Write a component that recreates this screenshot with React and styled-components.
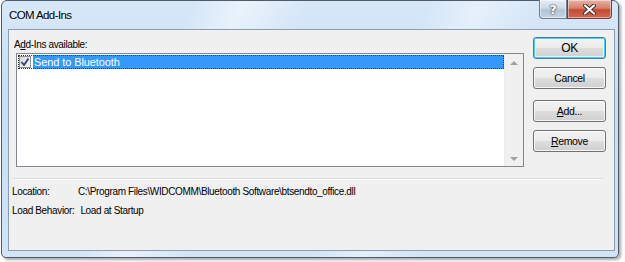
import React from "react";
import styled, { createGlobalStyle } from "styled-components";

const Global = createGlobalStyle`
  html, body { margin: 0; padding: 0; background: #ffffff; }
  body { font-family: "Liberation Sans", Arial, sans-serif; }
`;

const Page = styled.div`
  width: 625px;
  height: 262px;
  padding: 0 0 0 1px;
  box-sizing: border-box;
`;

const Window = styled.div`
  position: relative;
  width: 618px;
  height: 258px;
  box-sizing: border-box;
  border: 1px solid #4d5b6b;
  border-radius: 6px 6px 5px 5px;
  background:
    linear-gradient(115deg, rgba(255,255,255,0) 0%, rgba(255,255,255,0) 26%, rgba(255,255,255,0.5) 33%, rgba(255,255,255,0) 42%, rgba(255,255,255,0) 58%, rgba(255,255,255,0.4) 65%, rgba(255,255,255,0) 74%),
    linear-gradient(180deg, #d6e7f8 0%, #c9def3 40%, #d2e4f6 100%);
  box-shadow: 2px 2px 3px rgba(0,0,0,0.35);
  display: flex;
  flex-direction: column;
  padding: 0 3px 6px 6px;
`;

const TitleBar = styled.div`
  height: 28px;
  display: flex;
  align-items: center;
`;

const Title = styled.div`
  font-family: "Liberation Sans", Arial, sans-serif;
  font-size: 11.5px;
  letter-spacing: -0.6px;
  color: #000;
  padding-left: 1px;
  text-shadow: 0 0 6px rgba(255,255,255,0.9);
`;

const Captions = styled.div`
  position: absolute;
  top: -1px;
  right: 6px;
  display: flex;
`;

const CapButton = styled.div`
  width: ${p => p.$w}px;
  height: 19px;
  box-sizing: border-box;
  border: 1px solid ${p => (p.$close ? "#7a3b32" : "#6f7f90")};
  border-top: none;
  border-radius: ${p => (p.$close ? "0 0 4px 0" : "0 0 0 4px")};
  background: ${p =>
    p.$close
      ? "linear-gradient(180deg, #e9b2a6 0%, #d7806e 45%, #c54a32 55%, #cf6a4f 100%)"
      : "linear-gradient(180deg, #e6eef7 0%, #cdd9e6 45%, #b3c3d6 55%, #c6d4e3 100%)"};
  box-shadow: inset 0 0 0 1px rgba(255,255,255,0.45);
  display: flex;
  align-items: center;
  justify-content: center;
  font-family: "DejaVu Sans", sans-serif;
  font-weight: bold;
  font-size: 13px;
  color: #fff;
  text-shadow: 0 0 1px #333, 0 0 2px #333;
`;

const Client = styled.div`
  flex: 1;
  box-sizing: border-box;
  border: 1px solid #8a9db3;
  background: #f0f0f0;
  display: flex;
  flex-direction: column;
  padding: 0 8px 0 3px;
  font-family: "Liberation Sans", Arial, sans-serif;
  font-size: 10px;
  letter-spacing: -0.35px;
  color: #000;
`;

const TopRow = styled.div`
  display: flex;
  gap: 9px;
`;

const ListColumn = styled.div`
  flex: 1;
  display: flex;
  flex-direction: column;
`;

const Label = styled.div`
  height: 14px;
  padding-top: 8px;
  padding-left: 2px;
  line-height: 14px;
`;

const ListBox = styled.div`
  margin-top: 1px;
  margin-left: 4px;
  height: 114px;
  box-sizing: border-box;
  border: 1px solid #828790;
  background: #fff;
  display: flex;
`;

const ListItems = styled.div`
  flex: 1;
  padding: 1px 0 0 1px;
`;

const Item = styled.div`
  display: flex;
  align-items: center;
  height: 14px;
  outline: 1px dotted #333;
  outline-offset: -1px;
`;

const Check = styled.div`
  width: 12px;
  height: 12px;
  margin: 0 2px 0 1px;
  box-sizing: border-box;
  border: 1px solid #8f8f8f;
  background: linear-gradient(135deg, #d8d8d8, #f7f7f7);
  display: flex;
  align-items: center;
  justify-content: center;
`;

const ItemText = styled.div`
  flex: 1;
  height: 14px;
  line-height: 14px;
  background: #3399ff;
  color: #fff;
  padding-left: 1px;
  font-size: 11px;
  letter-spacing: -0.1px;
`;

const ScrollBar = styled.div`
  width: 18px;
  background: #f0f0f0;
  border-left: 1px solid #ececec;
  display: flex;
  flex-direction: column;
  justify-content: space-between;
  align-items: center;
  padding: 7px 0 5px;
`;

const Arrow = styled.div`
  width: 0;
  height: 0;
  border-left: 4px solid transparent;
  border-right: 4px solid transparent;
  ${p => (p.$down ? "border-top: 4px solid #a0a0a0;" : "border-bottom: 4px solid #a0a0a0;")}
`;

const ButtonColumn = styled.div`
  width: 73px;
  display: flex;
  flex-direction: column;
  padding-top: 7px;
`;

const Button = styled.div`
  height: 22px;
  margin-top: ${p => p.$mt}px;
  box-sizing: border-box;
  border: 1px solid ${p => (p.$default ? "#3c7fb1" : "#707070")};
  border-radius: 3px;
  background: linear-gradient(180deg, #f2f2f2 0%, #ebebeb 48%, #dddddd 52%, #cfcfcf 100%);
  box-shadow: ${p =>
    p.$default
      ? "inset 0 0 0 1px #48d0f4, inset 0 0 0 2px rgba(255,255,255,0.6)"
      : "inset 0 0 0 1px rgba(255,255,255,0.8)"};
  display: flex;
  align-items: center;
  justify-content: center;
  font-size: ${p => (p.$big ? 12 : 10.5)}px;
`;

const Separator = styled.div`
  margin: 11px 2px 0 1px;
  height: 0;
  border-top: 1px solid #dcdcdc;
  border-bottom: 1px solid #fcfcfc;
`;

const Info = styled.div`
  display: flex;
  flex-direction: column;
  gap: 5px;
  padding: 5px 0 0 0;
  line-height: 14px;
`;

const InfoRow = styled.div`
  display: flex;
  white-space: nowrap;
`;

const InfoLabel = styled.span`
  min-width: 60px;
  margin-right: 6px;
`;

const U = styled.span`
  text-decoration: underline;
`;

export default function App() {
  return (
    <Page>
      <Global />
      <Window>
        <TitleBar>
          <Title>COM Add-Ins</Title>
        </TitleBar>
        <Captions>
          <CapButton $w={28}>?</CapButton>
          <CapButton $w={45} $close>
            <svg width="13" height="11" viewBox="0 0 13 11">
              <path d="M2 1.5 L11 9.5 M11 1.5 L2 9.5" stroke="#3a2a2a" strokeWidth="4" strokeLinecap="round" />
              <path d="M2 1.5 L11 9.5 M11 1.5 L2 9.5" stroke="#ffffff" strokeWidth="2.2" strokeLinecap="round" />
            </svg>
          </CapButton>
        </Captions>
        <Client>
          <TopRow>
            <ListColumn>
              <Label>
                A<U>d</U>d-Ins available:
              </Label>
              <ListBox>
                <ListItems>
                  <Item>
                    <Check>
                      <svg width="10" height="10" viewBox="0 0 10 10">
                        <path d="M1.5 5 L4 8 L8.5 1.5" fill="none" stroke="#2a3e7a" strokeWidth="1.7" />
                      </svg>
                    </Check>
                    <ItemText>Send to Bluetooth</ItemText>
                  </Item>
                </ListItems>
                <ScrollBar>
                  <Arrow />
                  <Arrow $down />
                </ScrollBar>
              </ListBox>
            </ListColumn>
            <ButtonColumn>
              <Button $default $big $mt={0}>OK</Button>
              <Button $mt={8}>Cancel</Button>
              <Button $mt={11}>
                <span><U>A</U>dd...</span>
              </Button>
              <Button $mt={8}>
                <span><U>R</U>emove</span>
              </Button>
            </ButtonColumn>
          </TopRow>
          <Separator />
          <Info>
            <InfoRow>
              <InfoLabel>Location:</InfoLabel>
              <span>C:\Program Files\WIDCOMM\Bluetooth Software\btsendto_office.dll</span>
            </InfoRow>
            <InfoRow>
              <InfoLabel>Load Behavior:</InfoLabel>
              <span>Load at Startup</span>
            </InfoRow>
          </Info>
        </Client>
      </Window>
    </Page>
  );
}
